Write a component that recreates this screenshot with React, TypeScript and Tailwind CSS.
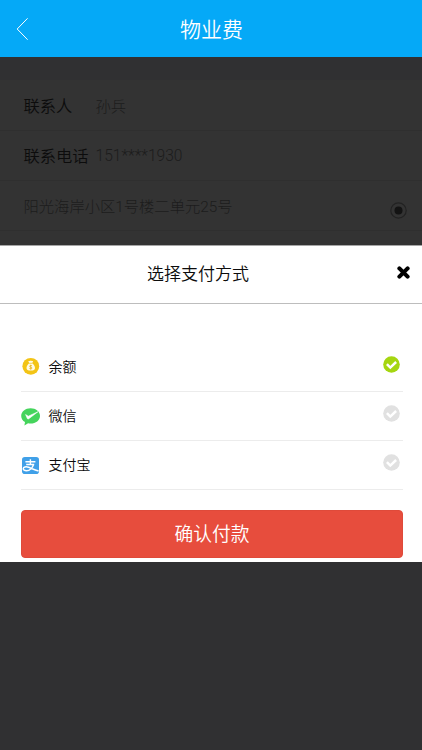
import type { ReactNode } from 'react';

function BalanceIcon() {
  return (
    <svg width="20" height="20" viewBox="0 0 20 20">
      <circle cx="9.800" cy="10.300" r="8.400" fill="#f3c416" />
      <path
        d="M7.300 4.900c.8.3 1.500-.4 2.400-.1.900-.3 1.600.4 2.400.1l-.9 2.300c1.700 1.200 2.800 3 2.800 4.900 0 1.600-1.200 2.400-2.500 2.400H8c-1.300 0-2.500-.8-2.500-2.400 0-1.900 1.100-3.700 2.700-4.900z"
        fill="#fffbe8"
      />
      <path d="M8.100 7.300h3.200" stroke="#f3c416" strokeWidth=".7" />
      <path
        d="M11 9.800c-.5-.5-2.400-.6-2.400.5 0 1.100 2.400.6 2.400 1.700 0 1.100-1.900 1.100-2.600.4M9.700 8.800v4.700"
        fill="none"
        stroke="#e6b41a"
        strokeWidth=".8"
      />
    </svg>
  );
}

function WechatIcon() {
  return (
    <svg width="20" height="20" viewBox="0 0 20 20">
      <path
        d="M9.600 2.300c5.200 0 9.400 3.400 9.400 7.600s-4.200 7.700-9.400 7.700c-.9 0-1.700-.1-2.500-.3l-3.700 2.100.6-3.400C1.600 14.600.2 12.400.2 9.900c0-4.200 4.200-7.600 9.400-7.600z"
        fill="#45d45c"
      />
      <path d="M4.600 8.600l2.700 1.600 9.600-4.400-9.400 7.100-1.100-.2z" fill="#fff" stroke="#fff" strokeWidth=".6" strokeLinejoin="round" />
    </svg>
  );
}

function AlipayIcon() {
  return (
    <svg width="20" height="20" viewBox="0 0 20 20">
      <rect x="1" y="2" width="17" height="17" rx="2.800" fill="#40a0e8" />
      <g fill="none" stroke="#fff">
        <path d="M4.400 6.700h10M9.400 4.200v5.200M5.200 9.500h8" strokeWidth="1.400" />
        <path d="M12.500 9.500c-.9 2.900-3.500 6.300-7 6.300-1.900 0-3.400-.9-3.200-2.300.2-1.500 2.500-2.200 5.300-1.200 2.800 1 5.700 2.700 10 3.700" strokeWidth="1.500" />
      </g>
    </svg>
  );
}

function CheckMark({ on }: { on: boolean }) {
  return (
    <svg width="17" height="17" viewBox="0 0 17 17" className={on ? 'text-[#a5d610]' : 'text-[#e1e1e1]'}>
      <circle cx="8.500" cy="8.500" r="8.300" fill="currentColor" />
      <path d="M3.900 8.100l3.400 3.500 5.800-5.600" fill="none" stroke="#fff" strokeWidth="2.500" />
    </svg>
  );
}

function Method({ icon, label, on = false }: { icon: ReactNode; label: string; on?: boolean }) {
  return (
    <li className="flex h-[49.200px] items-center border-b border-[#ececec]">
      {icon}
      <span className="ml-[7.500px] text-[14px] font-[350] text-[#0c0c0c]">{label}</span>
      <span className="mr-[3.500px] mb-1 ml-auto">
        <CheckMark on={on} />
      </span>
    </li>
  );
}

export default function App() {
  return (
    <div className="flex h-[750px] w-[422px] flex-col overflow-hidden bg-[#303032] font-['Noto_Sans_CJK_SC',sans-serif]">
      <header className="grid h-[57px] shrink-0 grid-cols-[60px_1fr_60px] items-center bg-[#05a9f7] text-white">
        <svg className="ml-4" width="13" height="24" viewBox="0 0 13 24">
          <path d="M11.600 1.300L1.200 12l10.400 10.700" fill="none" stroke="#fff" strokeWidth="1" />
        </svg>
        <h1 className="ml-px text-center text-[21px] font-[350]">物业费</h1>
      </header>

      <section className="mt-[23px] h-[165px] shrink-0 bg-[#333333] text-[15.300px] font-light text-[#1c1c1c]">
        <div className="flex h-[51px] items-center border-b border-[#2f2f2f] pl-[23.500px]">
          <span className="w-[72px] text-[16.300px] font-[350] text-[#0c0c0c]">联系人</span>
          <span>孙兵</span>
        </div>
        <div className="flex h-[50px] items-center border-b border-[#2f2f2f] pl-[23.500px]">
          <span className="w-[72px] text-[16.300px] font-[350] text-[#0c0c0c]">联系电话</span>
          <span className="pt-[3px] font-['Roboto',sans-serif] text-[15.600px]">151****1930</span>
        </div>
        <div className="flex h-[50px] items-center justify-between border-b border-[#2f2f2f] pr-[15px] pl-[23.500px]">
          <span className="pt-1 font-['Roboto','Noto_Sans_CJK_SC',sans-serif]">阳光海岸小区1号楼二单元25号</span>
          <svg className="mt-2.5" width="17" height="17" viewBox="0 0 17 17">
            <circle cx="8.500" cy="8.500" r="7.700" fill="none" stroke="#222222" strokeWidth="1.200" />
            <circle cx="8.500" cy="8.500" r="4" fill="#131313" />
          </svg>
        </div>
      </section>

      <section className="flex h-[317px] shrink-0 flex-col border-t border-[#a6a6a6] bg-white">
        <div className="grid h-[58px] grid-cols-[60px_1fr_60px] items-center border-b border-[#bdbdbd]">
          <h2 className="col-start-2 mr-[26px] pb-[3px] text-center text-[17px] font-[350] text-[#0c0c0c]">选择支付方式</h2>
          <button className="mr-3 mb-[5px] justify-self-end" aria-label="关闭">
            <svg width="13" height="13" viewBox="0 0 13 13">
              <path d="M2.400 2.400l8.200 8.200M10.600 2.400l-8.200 8.200" stroke="#000" strokeWidth="4.100" strokeLinecap="round" />
            </svg>
          </button>
        </div>
        <ul className="mt-[38.400px] mr-[19px] ml-[21px]">
          <Method icon={<BalanceIcon />} label="余额" on />
          <Method icon={<WechatIcon />} label="微信" />
          <Method icon={<AlipayIcon />} label="支付宝" />
        </ul>
        <button className="mt-[19.600px] mr-[19px] ml-[21px] h-[48px] rounded-[4px] border border-[#df4a3a] bg-[#e74d3d] text-[18.800px] font-[350] text-white">
          确认付款
        </button>
      </section>
    </div>
  );
}
